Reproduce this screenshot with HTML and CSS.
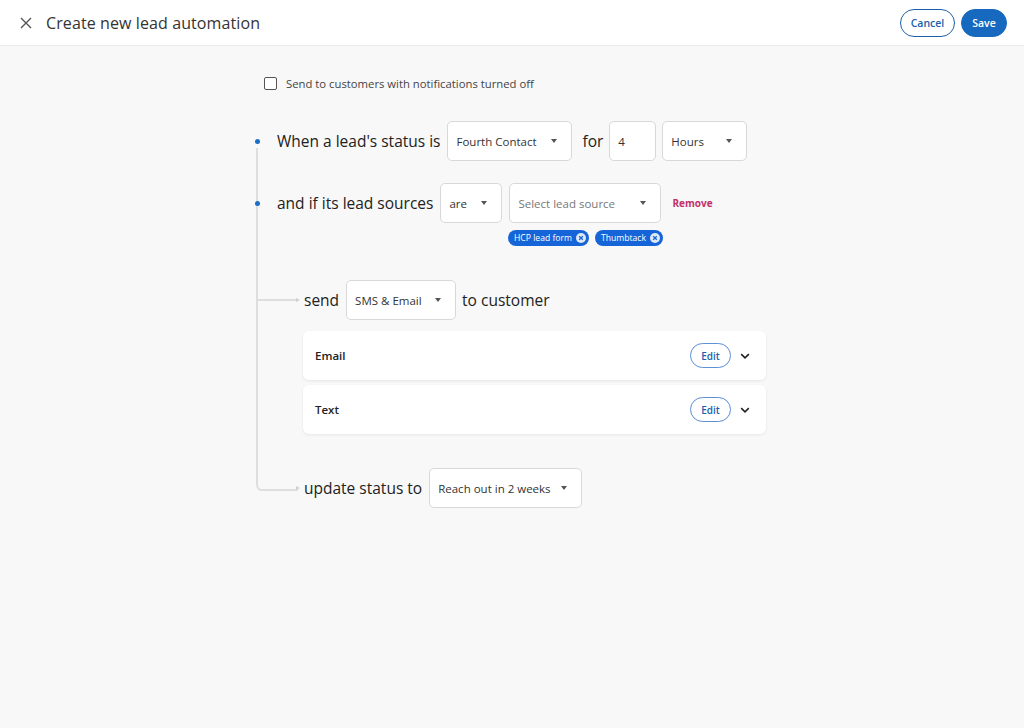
FILE: index.html
```html
<!DOCTYPE html>
<html lang="en">
<head>
<meta charset="utf-8">
<title>Create new lead automation</title>
<link rel="stylesheet" href="styles.css">
</head>
<body>
<header class="topbar">
  <div class="topbar-left">
    <svg class="close-icon" width="12" height="12" viewBox="0 0 12 12"><path d="M1 1L11 11M11 1L1 11" stroke="#555" stroke-width="1.4" fill="none"/></svg>
    <h1 class="title">Create new lead automation</h1>
  </div>
  <div class="topbar-actions">
    <button class="btn btn-outline">Cancel</button>
    <button class="btn btn-primary">Save</button>
  </div>
</header>
<main class="main">
  <label class="check-row">
    <span class="checkbox"></span>
    <span class="check-text">Send to customers with notifications turned off</span>
  </label>

  <div class="tree">
    <div class="row">
      <span class="dot"></span>
      <span class="label">When a lead's status is</span>
      <div class="select w-status"><span>Fourth Contact</span><span class="caret"></span></div>
      <span class="label label-for">for</span>
      <div class="input"><span>4</span></div>
      <div class="select w-hours"><span>Hours</span><span class="caret"></span></div>
    </div>

    <div class="row row-2">
      <span class="dot"></span>
      <span class="label">and if its lead sources</span>
      <div class="select w-are"><span>are</span><span class="caret"></span></div>
      <div class="select w-source"><span class="placeholder">Select lead source</span><span class="caret"></span></div>
      <span class="remove">Remove</span>
    </div>
    <div class="chips">
      <span class="chip">HCP lead form<span class="chip-x"><svg width="8" height="8" viewBox="0 0 8 8"><path d="M2.2 2.2L5.8 5.8M5.8 2.2L2.2 5.8" stroke="#1565d8" stroke-width="1.3"/></svg></span></span>
      <span class="chip">Thumbtack<span class="chip-x"><svg width="8" height="8" viewBox="0 0 8 8"><path d="M2.2 2.2L5.8 5.8M5.8 2.2L2.2 5.8" stroke="#1565d8" stroke-width="1.3"/></svg></span></span>
    </div>

    <div class="branch branch-send">
      <span class="label">send</span>
      <div class="select w-channel"><span>SMS &amp; Email</span><span class="caret"></span></div>
      <span class="label">to customer</span>
    </div>

    <div class="cards">
      <div class="card">
        <span class="card-title">Email</span>
        <div class="card-actions">
          <button class="btn-edit">Edit</button>
          <svg class="chev" width="10" height="6" viewBox="0 0 10 6"><path d="M1.2 1.2L5 4.8L8.8 1.2" stroke="#222" stroke-width="1.6" fill="none"/></svg>
        </div>
      </div>
      <div class="card">
        <span class="card-title">Text</span>
        <div class="card-actions">
          <button class="btn-edit">Edit</button>
          <svg class="chev" width="10" height="6" viewBox="0 0 10 6"><path d="M1.2 1.2L5 4.8L8.8 1.2" stroke="#222" stroke-width="1.6" fill="none"/></svg>
        </div>
      </div>
    </div>

    <div class="branch branch-update">
      <span class="label">update status to</span>
      <div class="select w-update"><span>Reach out in 2 weeks</span><span class="caret"></span></div>
    </div>
  </div>
</main>
</body>
</html>
```

FILE: styles.css
```css
* { box-sizing: border-box; }
html, body { margin: 0; padding: 0; }
body {
  font-family: "Open Sans", "Noto Sans", sans-serif;
  background: #f8f8f8;
  color: #222;
  width: 1024px;
  height: 728px;
  overflow: hidden;
}
.topbar {
  height: 46px;
  background: #fff;
  border-bottom: 1px solid #ebebeb;
  display: flex;
  align-items: center;
  justify-content: space-between;
  padding: 0 17px 0 20px;
}
.topbar-left { display: flex; align-items: center; }
.close-icon { margin-right: 14px; }
.title {
  margin: 0;
  font-size: 16px;
  font-weight: 500;
  color: #333;
  letter-spacing: 0.1px;
}
.topbar-actions { display: flex; gap: 6px; }
.btn {
  font-family: inherit;
  height: 28px;
  border-radius: 14px;
  font-size: 10.5px;
  font-weight: 600;
  cursor: pointer;
}
.btn-outline {
  width: 55px;
  background: #fff;
  border: 1px solid #1b5fa8;
  color: #1b5fa8;
}
.btn-primary {
  width: 46px;
  background: #1769c0;
  border: 1px solid #1769c0;
  color: #fff;
}
.main { padding-top: 30px; }
.check-row {
  display: flex;
  align-items: center;
  margin-left: 264px;
  height: 14px;
}
.checkbox {
  width: 13px;
  height: 13px;
  border: 1.5px solid #555;
  border-radius: 2px;
  background: #fff;
  margin-right: 9px;
}
.check-text { font-size: 11.3px; color: #444; }

.tree {
  position: relative;
  margin-left: 254px;
  margin-top: 31px;
}
.tree::before {
  content: "";
  position: absolute;
  left: 2px;
  top: 27px;
  width: 40px;
  height: 341px;
  border-left: 2px solid #dedede;
  border-bottom: 2px solid #dedede;
  border-bottom-left-radius: 6px;
}
.row {
  display: flex;
  align-items: center;
  height: 40px;
}
.row-2 { margin-top: 22px; }
.dot {
  width: 5px;
  height: 5px;
  border-radius: 50%;
  background: #1a6fc4;
  margin-right: 17px;
  margin-left: 1px;
  position: relative;
  z-index: 1;
}
.label {
  font-size: 15.5px;
  color: #222;
  margin-right: 7px;
}
.label-for { margin-left: 4px; margin-right: 6px; }
.select, .input {
  height: 40px;
  background: #fff;
  border: 1px solid #d8d8d8;
  border-radius: 5px;
  display: flex;
  align-items: center;
  justify-content: space-between;
  padding: 0 14px 0 8px;
  font-size: 11.5px;
  color: #333;
  margin-right: 6px;
  flex: none;
}
.caret {
  width: 0;
  height: 0;
  border-left: 3.5px solid transparent;
  border-right: 3.5px solid transparent;
  border-top: 4px solid #555;
}
.placeholder { color: #777; }
.w-status { width: 125px; }
.w-hours { width: 85px; }
.input { width: 47px; }
.w-are { width: 62px; margin-right: 7px; }
.w-source { width: 152px; margin-right: 11px; }
.w-channel { width: 110px; }
.w-update { width: 153px; }
.remove {
  font-size: 10px;
  font-weight: 700;
  color: #c2306a;
}
.chips {
  display: flex;
  gap: 6px;
  margin-left: 254px;
  margin-top: 7px;
  height: 16px;
}
.chip {
  display: inline-flex;
  align-items: center;
  height: 16px;
  background: #1565d8;
  color: #fff;
  font-size: 8.6px;
  border-radius: 8px;
  padding: 0 3px 0 6px;
}
.chip-x {
  width: 10px;
  height: 10px;
  border-radius: 50%;
  background: #dfe8f5;
  display: inline-flex;
  align-items: center;
  justify-content: center;
  margin-left: 4px;
}
.branch {
  position: relative;
  display: flex;
  align-items: center;
  height: 40px;
  padding-left: 50px;
}
.branch::after {
  content: "";
  position: absolute;
  left: 42px;
  top: 50%;
  margin-top: -2px;
  border-top: 2.5px solid transparent;
  border-bottom: 2.5px solid transparent;
  border-left: 4px solid #cfcfcf;
}
.branch-send { margin-top: 34px; }
.branch-send::before {
  content: "";
  position: absolute;
  left: 2px;
  width: 40px;
  top: 50%;
  margin-top: -1px;
  border-top: 2px solid #dedede;
}
.branch-update { margin-top: 34px; }
.branch .label { font-size: 15.5px; margin-right: 7px; }
.cards {
  margin-left: 49px;
  margin-top: 11px;
  width: 463px;
  display: flex;
  flex-direction: column;
  gap: 5px;
}
.card {
  height: 49px;
  background: #fff;
  border-radius: 6px;
  box-shadow: 0 1px 3px rgba(0,0,0,0.08);
  display: flex;
  align-items: center;
  justify-content: space-between;
  padding: 0 16px 0 12px;
}
.card-title { font-size: 11.5px; font-weight: 600; color: #222; }
.card-actions { display: flex; align-items: center; gap: 9px; }
.btn-edit {
  font-family: inherit;
  width: 41px;
  height: 25px;
  border-radius: 13px;
  border: 1px solid #5b8fd6;
  background: #fff;
  color: #1b5fa8;
  font-size: 10px;
  font-weight: 600;
  padding: 0;
}
.chev { display: block; }
```
